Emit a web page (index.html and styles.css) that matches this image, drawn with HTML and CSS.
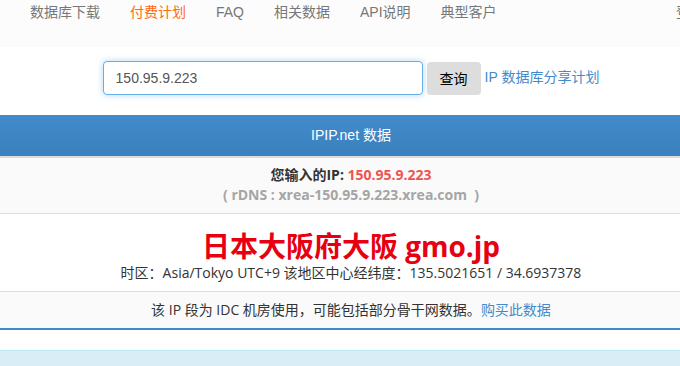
FILE: index.html
```html
<!DOCTYPE html>
<html lang="zh-CN">

<head>
  <meta charset="UTF-8">
  <title>IPIP.net</title>
  <link rel="stylesheet" href="styles.css">
</head>

<body>
  <div class="page">
    <div class="nav">
      <a href="#">数据库下载</a>
      <a href="#" class="active">付费计划</a>
      <a href="#">FAQ</a>
      <a href="#">相关数据</a>
      <a href="#">API说明</a>
      <a href="#">典型客户</a>
      <a href="#" class="nav-right">登录</a>
    </div>

    <form class="search">
      <input type="text" class="ip-input" value="150.95.9.223">
      <button type="button" class="btn">查询</button>
      <a href="#" class="share">IP 数据库分享计划</a>
    </form>

    <div class="result">
      <div class="result-head">IPIP.net 数据</div>
      <div class="row row-ip">
        <div class="ip-line">您输入的IP: <span class="ip">150.95.9.223</span></div>
        <div class="rdns">( rDNS : xrea-150.95.9.223.xrea.com &nbsp;)</div>
      </div>
      <div class="row row-loc">
        <div class="location">日本大阪府大阪 gmo.jp</div>
        <div class="tz">时区：Asia/Tokyo UTC+9 该地区中心经纬度：135.5021651 / 34.6937378</div>
      </div>
      <div class="row row-note">
        该 IP 段为 IDC 机房使用，可能包括部分骨干网数据。<a href="#">购买此数据</a>
      </div>
    </div>

    <div class="panel">
      <div class="panel-title">ASN 数据</div>
    </div>
  </div>
</body>

</html>
```

FILE: styles.css
```css
* {
  margin: 0;
  padding: 0;
  box-sizing: border-box;
}
body {
  font-family: "Liberation Sans", "Noto Sans CJK SC", sans-serif;
  font-size: 14px;
  color: #333;
  background: #fff;
  overflow: hidden;
}
a {
  text-decoration: none;
  color: #428bca;
}
/* page is a bit wider than the window, so it is cut on the right */
.page {
  width: 702px;
}

/* top nav */
.nav {
  display: flex;
  height: 46px;
  padding-left: 15px;
  background: #fcfcfc;
  border-bottom: 1px solid #fdf6ea;
}
.nav a {
  padding: 0 15px;
  line-height: 24px;
  color: #777;
  white-space: nowrap;
}
.nav a.active {
  color: #ff6a13;
}
.nav .nav-right {
  margin-left: auto;
  width: 26px;
  padding: 0;
  overflow: hidden;
}

/* search */
.search {
  display: flex;
  align-items: center;
  justify-content: center;
  padding-top: 15px;
  margin-bottom: 20px;
}
.ip-input {
  width: 320px;
  height: 34px;
  padding: 0 12px;
  font-family: "Liberation Sans", sans-serif;
  font-size: 14px;
  color: #555;
  border: 1px solid #66afe9;
  border-radius: 4px;
  box-shadow: 0 0 6px rgba(102, 175, 233, .5);
  outline: none;
}
.btn {
  width: 54px;
  height: 33px;
  margin-left: 4px;
  background: #ddd;
  border: none;
  border-radius: 4px;
  font-family: "Liberation Sans", "Noto Sans CJK SC", sans-serif;
  font-size: 14px;
  color: #000;
}
.share {
  margin-left: 4px;
  margin-top: -4px;
}

/* result table */
.result-head {
  height: 43px;
  line-height: 41px;
  text-align: center;
  color: #fff;
  background: linear-gradient(#428bca, #3a80bf);
  border-bottom: 2px solid #dcdcdc;
}
.row {
  text-align: center;
  border-bottom: 1px solid #ddd;
  font-family: "Open Sans", "Noto Sans CJK SC", sans-serif;
}
.row-ip {
  background: #fafafa;
  padding: 7px 0 8px;
  line-height: 20px;
  font-weight: bold;
}
.ip {
  color: #ef5350;
}
.rdns {
  color: #a5a5a5;
}
.row-loc {
  padding: 15px 0 8px;
}
.location {
  font-size: 28px;
  line-height: 34px;
  font-weight: bold;
  color: #e60012;
}
.tz {
  line-height: 20px;
}
.row-note {
  background: #fafafa;
  padding: 8px 0;
  line-height: 20px;
  border-bottom: 2px solid #428bca;
}

.panel {
  margin-top: 20px;
  height: 60px;
  background: #d9edf7;
  border-top: 1px solid #bce8f1;
  text-align: center;
}
.panel-title {
  padding-top: 12px;
  line-height: 20px;
  color: #31708f;
}
```
